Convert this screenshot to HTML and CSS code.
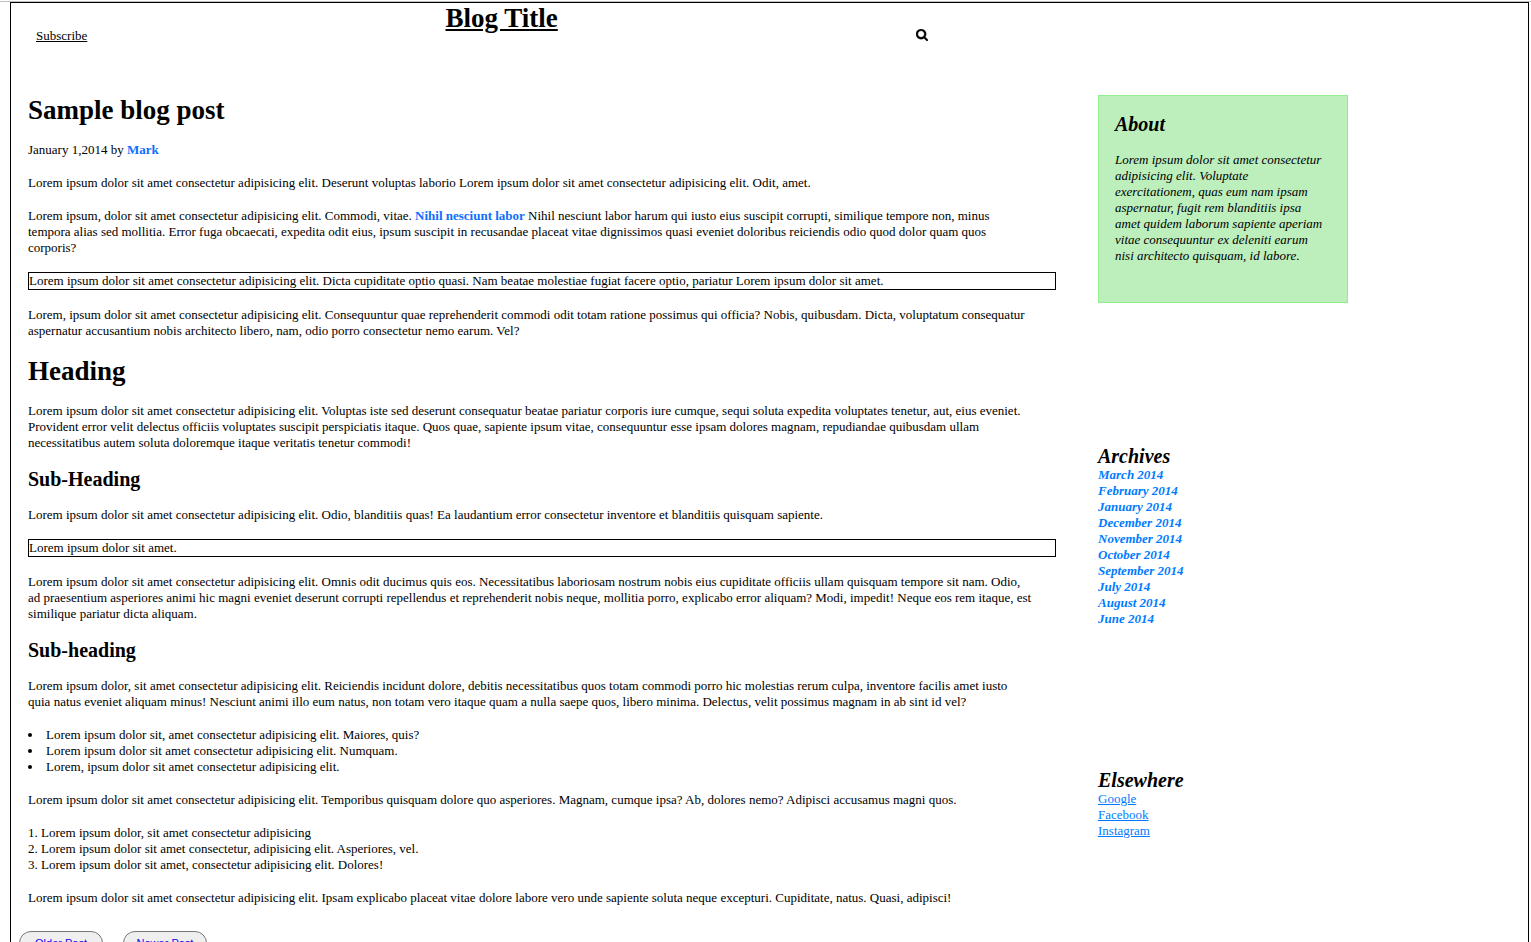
FILE: index.html
```html
<!DOCTYPE html>
<html lang="en">
<head>
<meta charset="utf-8">
<title>Blog Title</title>
<link rel="stylesheet" href="styles.css">
</head>
<body>
<div class="topline"></div>
<div class="page">
  <header class="header">
    <a class="subscribe" href="#">Subscribe</a>
    <h1 class="blog-title">Blog Title</h1>
    <button class="search" type="button" aria-label="Search">
      <svg viewBox="0 0 1664 1664" width="12" height="12" aria-hidden="true"><path stroke="#000" stroke-width="50" d="M1152 704q0-185-131.500-316.500t-316.500-131.500-316.500 131.500-131.500 316.500 131.500 316.500 316.500 131.500 316.500-131.500 131.500-316.500zm512 832q0 52-38 90t-90 38q-54 0-90-38l-343-342q-179 124-399 124-143 0-273.500-55.500t-225-150-150-225-55.500-273.500 55.500-273.500 150-225 225-150 273.500-55.500 273.500 55.500 225 150 150 225 55.500 273.500q0 220-124 399l343 343q37 37 37 90z"/></svg>
    </button>
  </header>
  <div class="layout">
    <main class="main">
      <article class="post">
        <h1>Sample blog post</h1>
        <p>January 1,2014 by <a class="accent" href="#">Mark</a></p>
        <p>Lorem ipsum dolor sit amet consectetur adipisicing elit. Deserunt voluptas laborio Lorem ipsum dolor sit amet consectetur adipisicing elit. Odit, amet.</p>
        <p>Lorem ipsum, dolor sit amet consectetur adipisicing elit. Commodi, vitae. <a class="accent" href="#">Nihil nesciunt labor</a> Nihil nesciunt labor harum qui iusto eius suscipit corrupti, similique tempore non, minus<br>tempora alias sed mollitia. Error fuga obcaecati, expedita odit eius, ipsum suscipit in recusandae placeat vitae dignissimos quasi eveniet doloribus reiciendis odio quod dolor quam quos<br>corporis?</p>
        <p class="boxed">Lorem ipsum dolor sit amet consectetur adipisicing elit. Dicta cupiditate optio quasi. Nam beatae molestiae fugiat facere optio, pariatur Lorem ipsum dolor sit amet.</p>
        <p>Lorem, ipsum dolor sit amet consectetur adipisicing elit. Consequuntur quae reprehenderit commodi odit totam ratione possimus qui officia? Nobis, quibusdam. Dicta, voluptatum consequatur<br>aspernatur accusantium nobis architecto libero, nam, odio porro consectetur nemo earum. Vel?</p>
        <h1>Heading</h1>
        <p>Lorem ipsum dolor sit amet consectetur adipisicing elit. Voluptas iste sed deserunt consequatur beatae pariatur corporis iure cumque, sequi soluta expedita voluptates tenetur, aut, eius eveniet.<br>Provident error velit delectus officiis voluptates suscipit perspiciatis itaque. Quos quae, sapiente ipsum vitae, consequuntur esse ipsam dolores magnam, repudiandae quibusdam ullam<br>necessitatibus autem soluta doloremque itaque veritatis tenetur commodi!</p>
        <h2>Sub-Heading</h2>
        <p>Lorem ipsum dolor sit amet consectetur adipisicing elit. Odio, blanditiis quas! Ea laudantium error consectetur inventore et blanditiis quisquam sapiente.</p>
        <p class="boxed">Lorem ipsum dolor sit amet.</p>
        <p>Lorem ipsum dolor sit amet consectetur adipisicing elit. Omnis odit ducimus quis eos. Necessitatibus laboriosam nostrum nobis eius cupiditate officiis ullam quisquam tempore sit nam. Odio,<br>ad praesentium asperiores animi hic magni eveniet deserunt corrupti repellendus et reprehenderit nobis neque, mollitia porro, explicabo error aliquam? Modi, impedit! Neque eos rem itaque, est<br>similique pariatur dicta aliquam.</p>
        <h2>Sub-heading</h2>
        <p>Lorem ipsum dolor, sit amet consectetur adipisicing elit. Reiciendis incidunt dolore, debitis necessitatibus quos totam commodi porro hic molestias rerum culpa, inventore facilis amet iusto<br>quia natus eveniet aliquam minus! Nesciunt animi illo eum natus, non totam vero itaque quam a nulla saepe quos, libero minima. Delectus, velit possimus magnam in ab sint id vel?</p>
        <ul>
          <li>Lorem ipsum dolor sit, amet consectetur adipisicing elit. Maiores, quis?</li>
          <li>Lorem ipsum dolor sit amet consectetur adipisicing elit. Numquam.</li>
          <li>Lorem, ipsum dolor sit amet consectetur adipisicing elit.</li>
        </ul>
        <p>Lorem ipsum dolor sit amet consectetur adipisicing elit. Temporibus quisquam dolore quo asperiores. Magnam, cumque ipsa? Ab, dolores nemo? Adipisci accusamus magni quos.</p>
        <ol>
          <li>Lorem ipsum dolor, sit amet consectetur adipisicing</li>
          <li>Lorem ipsum dolor sit amet consectetur, adipisicing elit. Asperiores, vel.</li>
          <li>Lorem ipsum dolor sit amet, consectetur adipisicing elit. Dolores!</li>
        </ol>
        <p>Lorem ipsum dolor sit amet consectetur adipisicing elit. Ipsam explicabo placeat vitae dolore labore vero unde sapiente soluta neque excepturi. Cupiditate, natus. Quasi, adipisci!</p>
      </article>
      <nav class="pager">
        <button type="button">Older Post</button>
        <button type="button">Newer Post</button>
      </nav>
    </main>
    <aside class="sidebar">
      <section class="about">
        <h2>About</h2>
        <p>Lorem ipsum dolor sit amet consectetur<br>adipisicing elit. Voluptate<br>exercitationem, quas eum nam ipsam<br>aspernatur, fugit rem blanditiis ipsa<br>amet quidem laborum sapiente aperiam<br>vitae consequuntur ex deleniti earum<br>nisi architecto quisquam, id labore.</p>
      </section>
      <section>
        <h2>Archives</h2>
        <ul class="archives">
          <li><a href="#">March 2014</a></li>
          <li><a href="#">February 2014</a></li>
          <li><a href="#">January 2014</a></li>
          <li><a href="#">December 2014</a></li>
          <li><a href="#">November 2014</a></li>
          <li><a href="#">October 2014</a></li>
          <li><a href="#">September 2014</a></li>
          <li><a href="#">July 2014</a></li>
          <li><a href="#">August 2014</a></li>
          <li><a href="#">June 2014</a></li>
        </ul>
      </section>
      <section>
        <h2>Elsewhere</h2>
        <ul class="elsewhere">
          <li><a href="#">Google</a></li>
          <li><a href="#">Facebook</a></li>
          <li><a href="#">Instagram</a></li>
        </ul>
      </section>
    </aside>
  </div>
</div>
</body>
</html>
```
FILE: styles.css
```css
* {
  box-sizing: border-box;
}

body,
h1,
h2,
p,
ul,
ol {
  margin: 0;
  padding: 0;
}

body {
  padding-top: 1px;
  background: #fff;
  color: #000;
  font: 13px/16px "Liberation Serif", "Times New Roman", serif;
}

h1 {
  font-size: 27px;
  line-height: 30px;
}

h2 {
  font-size: 20px;
  line-height: 22px;
}

.topline {
  height: 1px;
  background: #c0c0c0;
}

.page {
  margin: 0 2px 0 10px;
  border: 1px solid #000;
}

.header {
  display: flex;
  justify-content: space-between;
  align-items: flex-start;
  height: 92px;
  padding: 0 600px 0 25px;
}

.subscribe {
  margin-top: 25px;
  color: #000;
}

.blog-title {
  text-decoration: underline;
}

.search {
  display: flex;
  margin-top: 26px;
  padding: 0;
  border: 0;
  background: none;
}

.layout {
  display: grid;
  grid-template-columns: 1fr 250px;
  column-gap: 42px;
  padding: 0 180px 20px 17px;
}

.post {
  display: flex;
  flex-direction: column;
  gap: 17px;
}

.accent {
  color: #0d6efd;
  font-weight: bold;
  text-decoration: none;
}

.boxed {
  margin-top: -1px;
  border: 1px solid #000;
}

.post ul,
.post ol {
  list-style-position: inside;
}

.pager {
  display: flex;
  gap: 20px;
  margin: 25px 0 0 -9px;
}

.pager button {
  width: 84px;
  height: 24px;
  padding: 0;
  border: 1px solid #767676;
  border-radius: 12px;
  background: #efefef;
  color: #1a00ee;
  font: 11px "Liberation Sans", Arial, sans-serif;
}

.sidebar {
  display: flex;
  flex-direction: column;
  gap: 142px;
}

.sidebar h2 {
  font-style: italic;
}

.about {
  padding: 17px 16px 38px;
  border: 1px solid #90ee90;
  background: #bdefbd;
}

.about p {
  margin-top: 17px;
  font-style: italic;
}

.sidebar ul {
  list-style: none;
}

.sidebar a {
  color: #007bff;
}

.archives a {
  font-style: italic;
  font-weight: bold;
  text-decoration: none;
}
```
